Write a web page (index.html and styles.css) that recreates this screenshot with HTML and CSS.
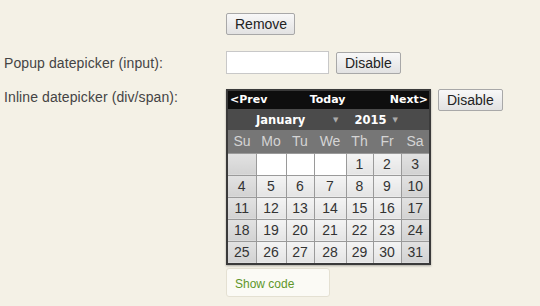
FILE: index.html
```html
<!DOCTYPE html>
<html>
<head>
	<title>datepicker demo</title>
	<link rel="stylesheet" href="styles.css">
</head>
<body>

	<div class="form">
		<div class="label"></div>
		<div class="ctrl">
			<button class="btn btn-remove">Remove</button>
		</div>

		<div class="label mid">Popup datepicker (input):</div>
		<div class="ctrl">
			<input type="text" class="field">
			<button class="btn">Disable</button>
		</div>

		<div class="label top">Inline datepicker (div/span):</div>
		<div class="ctrl ctrl-top">
			<div class="picker">
				<!-- 위쪽 검은 줄 -->
				<div class="nav">
					<span>&lt;Prev</span>
					<span class="today">Today</span>
					<span>Next&gt;</span>
				</div>
				<div class="sel">
					<span class="month">January</span><span class="arr">&#9660;</span>
					<span class="year">2015</span><span class="arr">&#9660;</span>
				</div>
				<table class="cal">
					<tr class="days">
						<th class="c1">Su</th><th class="c2">Mo</th><th class="c3">Tu</th><th class="c4">We</th><th class="c5">Th</th><th class="c6">Fr</th><th class="c7">Sa</th>
					</tr>
					<tr>
						<td class="we blank"></td><td class="empty"></td><td class="empty"></td><td class="empty"></td><td>1</td><td>2</td><td class="we">3</td>
					</tr>
					<tr>
						<td class="we">4</td><td>5</td><td>6</td><td>7</td><td>8</td><td>9</td><td class="we">10</td>
					</tr>
					<tr>
						<td class="we">11</td><td>12</td><td>13</td><td>14</td><td>15</td><td>16</td><td class="we">17</td>
					</tr>
					<tr>
						<td class="we">18</td><td>19</td><td>20</td><td>21</td><td>22</td><td>23</td><td class="we">24</td>
					</tr>
					<tr>
						<td class="we">25</td><td>26</td><td>27</td><td>28</td><td>29</td><td>30</td><td class="we">31</td>
					</tr>
				</table>
			</div>
			<button class="btn">Disable</button>
		</div>

		<div class="label"></div>
		<div class="ctrl">
			<div class="code">Show code</div>
		</div>
	</div>

</body>
</html>
```

FILE: styles.css
```css
* {
    box-sizing: border-box;
}

body {
    margin: 0;
    background: #f4f1e6;
    font-family: "Liberation Sans", Arial, sans-serif;
    color: #444;
}

.form {
    display: grid;
    grid-template-columns: 222px auto;
    row-gap: 16px;
    padding: 13px 0 0 4px;
}

.label {
    font-size: 14px;
    letter-spacing: .1px;
}
.label.mid { align-self: center; }
.label.top { margin-top: -1px; }

.ctrl {
    display: flex;
    align-items: center;
    gap: 7px;
}
.ctrl-top { align-items: flex-start; margin-top: -1px; }

.btn {
    height: 22px;
    padding: 0 8px;
    font-family: "Liberation Sans", Arial, sans-serif;
    font-size: 14px;
    color: #222;
    border: 1px solid #a8a8a8;
    border-radius: 2px;
    background: linear-gradient(#f8f8f8, #e2e2e2);
    cursor: pointer;
}
.btn-remove { width: 69px; }

.field {
    width: 103px;
    height: 23px;
    border: 1px solid #c8c8c8;
    background: #fff;
}

/* 달력 */
.picker {
    width: 205px;
    border: 2px solid #3a3a3a;
    background: #3a3a3a;
    box-shadow: 0 1px 2px rgba(0,0,0,.3);
}

.nav {
    display: flex;
    justify-content: space-between;
    height: 18px;
    padding: 0 1px 0 2px;
    background: #0e0e0e;
    color: #fff;
    font-family: "DejaVu Sans", Verdana, sans-serif;
    font-weight: bold;
    font-size: 11px;
    line-height: 18px;
}
.nav .today { margin-left: -2px; }

.sel {
    display: flex;
    align-items: center;
    height: 21px;
    padding-left: 28px;
    background: #4b4b4b;
    color: #fff;
    font-family: "DejaVu Sans", Verdana, sans-serif;
    font-weight: bold;
    font-size: 11.5px;
}
.sel .month { width: 77px; }
.sel .year { margin-left: 16px; width: 38px; }
.sel .arr {
    font-size: 7px;
    color: #aaa;
}

.cal {
    border-collapse: collapse;
    width: 201px;
    table-layout: fixed;
    font-size: 14px;
}
.cal th {
    height: 23px;
    background: #767676;
    color: #d4d4d4;
    font-weight: normal;
    padding: 0;
}
.c1 { width: 28px; }
.c2 { width: 30px; }
.c3 { width: 28px; }
.c4 { width: 32px; }
.c5 { width: 27px; }
.c6 { width: 28px; }
.c7 { width: 28px; }

.cal td {
    height: 22px;
    padding: 0;
    text-align: center;
    color: #333;
    border: 1px solid #9a9a9a;
    background: linear-gradient(#f4f4f4, #e4e4e4);
}
.cal tr td:first-child { border-left: 0; }
.cal tr td:last-child { border-right: 0; }
.cal tr:last-child td { border-bottom: 0; }
.cal td.we { background: linear-gradient(#e2e2e2, #d2d2d2); }
.cal td.empty { background: #fff; }

.code {
    width: 104px;
    height: 29px;
    margin-top: -13px;
    padding: 8px 0 0 8px;
    font-size: 12px;
    color: #5f962a;
    background: #fbfaf5;
    border: 1px solid #e4e0d2;
    border-radius: 3px;
}
```
